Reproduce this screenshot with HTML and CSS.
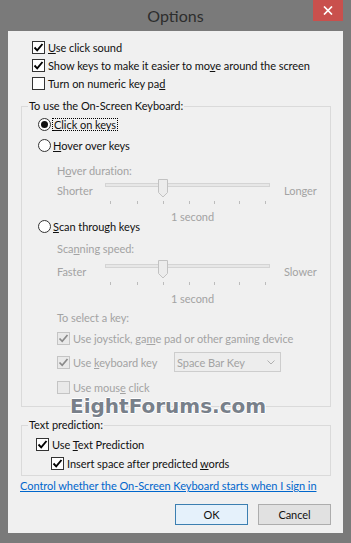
FILE: index.html
```html
<!DOCTYPE html>
<html>
<head>
<meta charset="utf-8">
<link rel="stylesheet" href="styles.css">
</head>
<body>
<div class="window">
  <div class="titlebar">
    <span class="title">Options</span>
    <span class="close"><svg width="10" height="9" viewBox="0 0 10 9"><path d="M1 0.5 L9 8.5 M9 0.5 L1 8.5" stroke="#fff" stroke-width="1.7" fill="none"/></svg></span>
  </div>
  <div class="client">
    <div class="top">
      <div class="row"><span class="box on"><svg width="11" height="11" viewBox="0 0 11 11"><path d="M1.5 5.5 L4.2 8.3 L9.5 2" stroke="#000" stroke-width="1.9" fill="none"/></svg></span><span><u>U</u>se click sound</span></div>
      <div class="row"><span class="box on"><svg width="11" height="11" viewBox="0 0 11 11"><path d="M1.5 5.5 L4.2 8.3 L9.5 2" stroke="#000" stroke-width="1.9" fill="none"/></svg></span><span>Show keys to make it easier to mo<u>v</u>e around the screen</span></div>
      <div class="row"><span class="box"></span><span>Turn on numeric key pa<u>d</u></span></div>
    </div>

    <fieldset class="group g1">
      <legend>To use the On-Screen Keyboard:</legend>
      <div class="gbody">
        <div class="rrow r1"><span class="radio on"></span><span class="focus"><u>C</u>lick on keys</span></div>
        <div class="rrow r2"><span class="radio"></span><span><u>H</u>over over keys</span></div>
        <div class="sub">
          <div class="lbl l-hover dis">H<u>o</u>ver duration:</div>
          <div class="slider s1">
            <span class="sl-l dis">Shorter</span>
            <svg width="165" height="26" viewBox="0 0 165 26">
              <rect x="0.5" y="4.5" width="164" height="3" fill="#e7e7e7" stroke="#d4d4d4"/>
              <path d="M53.5 0.5 H62.5 V13.5 L58 18 L53.5 13.5 Z" fill="#ececec" stroke="#c2c2c2"/>
              <path d="M5.5 22 V25 M32.5 22 V25 M58.5 22 V25 M84.5 22 V25 M109.5 22 V25 M134.5 22 V25 M160.5 22 V25" stroke="#bcbcbc"/>
            </svg>
            <span class="sl-r dis">Longer</span>
          </div>
          <div class="sec dis">1 second</div>
        </div>
        <div class="rrow r3"><span class="radio"></span><span><u>S</u>can through keys</span></div>
        <div class="sub">
          <div class="lbl l-scan dis">Sca<u>n</u>ning speed:</div>
          <div class="slider s2">
            <span class="sl-l dis">Faster</span>
            <svg width="165" height="26" viewBox="0 0 165 26">
              <rect x="0.5" y="4.5" width="164" height="3" fill="#e7e7e7" stroke="#d4d4d4"/>
              <path d="M53.5 0.5 H62.5 V13.5 L58 18 L53.5 13.5 Z" fill="#ececec" stroke="#c2c2c2"/>
              <path d="M5.5 22 V25 M32.5 22 V25 M58.5 22 V25 M84.5 22 V25 M109.5 22 V25 M134.5 22 V25 M160.5 22 V25" stroke="#bcbcbc"/>
            </svg>
            <span class="sl-r dis">Slower</span>
          </div>
          <div class="sec sec2 dis">1 second</div>
          <div class="lbl l-select dis">To select a key:</div>
          <div class="row c-joy dis"><span class="box dbox"><svg width="11" height="11" viewBox="0 0 11 11"><path d="M1.5 5.5 L4.2 8.3 L9.5 2" stroke="#8a8a8a" stroke-width="1.7" fill="none"/></svg></span><span>Use joystick, ga<u>m</u>e pad or other gaming device</span></div>
          <div class="row c-key dis"><span class="box dbox"><svg width="11" height="11" viewBox="0 0 11 11"><path d="M1.5 5.5 L4.2 8.3 L9.5 2" stroke="#8a8a8a" stroke-width="1.7" fill="none"/></svg></span><span class="keytext">Use <u>k</u>eyboard key</span>
            <span class="combo"><span>Space Bar Key</span><svg width="8" height="5" viewBox="0 0 8 5"><path d="M0.5 0.5 L4 4 L7.5 0.5" stroke="#b0b0b0" fill="none"/></svg></span>
          </div>
          <div class="row c-mouse dis"><span class="box dbox"></span><span>Use mous<u>e</u> click</span></div>
        </div>
      </div>
    </fieldset>

    <fieldset class="group g2">
      <legend>Text prediction:</legend>
      <div class="gbody2">
        <div class="row c-tp"><span class="box on"><svg width="11" height="11" viewBox="0 0 11 11"><path d="M1.5 5.5 L4.2 8.3 L9.5 2" stroke="#000" stroke-width="1.9" fill="none"/></svg></span><span>Use <u>T</u>ext Prediction</span></div>
        <div class="row c-sp"><span class="box on"><svg width="11" height="11" viewBox="0 0 11 11"><path d="M1.5 5.5 L4.2 8.3 L9.5 2" stroke="#000" stroke-width="1.9" fill="none"/></svg></span><span>Insert space after predicted <u>w</u>ords</span></div>
      </div>
    </fieldset>

    <a class="link" href="#">Control whether the On-Screen Keyboard starts when I sign in</a>

    <div class="buttons">
      <span class="btn ok">OK</span>
      <span class="btn">Cancel</span>
    </div>

    <div class="watermark">EightForums.com</div>
  </div>
</div>
</body>
</html>
```

FILE: styles.css
```css
* { box-sizing: border-box; }
html, body { margin: 0; padding: 0; }
body {
  width: 351px;
  height: 543px;
  overflow: hidden;
  background: #7a7a7a;
  font-family: Lato, "Liberation Sans", sans-serif;
  font-size: 11px;
  letter-spacing: -0.05px;
  color: #111;
}
.window {
  width: 351px;
  height: 543px;
  display: flex;
  flex-direction: column;
  background: #7a7a7a;
}
.titlebar {
  height: 31px;
  position: relative;
  display: flex;
  align-items: center;
  justify-content: center;
  flex: none;
}
.title {
  font-size: 16px;
  letter-spacing: 0;
  color: #2d2d2d;
}
.close {
  position: absolute;
  top: 0;
  right: 8px;
  width: 30px;
  height: 21px;
  background: #c9504d;
  display: flex;
  align-items: center;
  justify-content: center;
}
.client {
  margin: 0 8px;
  height: 502px;
  background: #f0f0f0;
  position: relative;
  display: flex;
  flex-direction: column;
  flex: none;
}
u { text-decoration: underline; text-underline-offset: 1px; }
.dis { color: #a3a3a3; }

.top { padding: 7px 0 0 24px; }
.row {
  height: 18px;
  display: flex;
  align-items: center;
  white-space: nowrap;
}
.box {
  width: 13px;
  height: 13px;
  border: 1px solid #333;
  background: #fff;
  margin-right: 3px;
  flex: none;
  display: flex;
  align-items: center;
  justify-content: center;
}
.dbox {
  border-color: #c4c4c4;
  background: #e9e9e9;
}

.group {
  margin: 7px 12px 0 13px;
  padding: 0;
  border: 1px solid #dadada;
  min-width: 0;
}
.group legend {
  margin-left: 6px;
  padding: 0 1px;
  height: 14px;
  line-height: 14px;
  white-space: nowrap;
}
.gbody { padding: 1px 0 10px 16px; }

.rrow {
  height: 21px;
  display: flex;
  align-items: center;
  white-space: nowrap;
}
.radio {
  width: 13px;
  height: 13px;
  border-radius: 50%;
  border: 1px solid #333;
  background: #fff;
  margin-right: 1px;
  flex: none;
  display: flex;
  align-items: center;
  justify-content: center;
}
.radio.on::after {
  content: "";
  width: 7px;
  height: 7px;
  border-radius: 50%;
  background: #111;
}
.rrow span:last-child { padding-left: 1px; }
.focus {
  border: 1px dotted #000;
  line-height: 11px;
  padding: 0 1px 0 0;
}
.r1 .focus { padding-left: 1px; }
.r3 { height: 20px; margin-top: -9px; }

.sub { padding-left: 19px; }
.lbl { height: 16px; line-height: 16px; }
.l-hover { margin-top: 7px; }
.l-scan { margin-top: 5px; }
.l-select { margin-top: 3px; }
.slider {
  display: grid;
  grid-template-columns: 48px 165px auto;
  height: 26px;
}
.slider svg { display: block; }
.s2 { margin-top: 3px; }
.sl-l, .sl-r { line-height: 16px; margin-top: 4px; }
.sl-r { margin-left: 14px; }
.sec {
  height: 16px;
  line-height: 16px;
  padding-left: 114px;
  margin-top: 4px;
}
.sec2 { margin-top: 5px; }
.c-joy { height: 19px; margin-top: 3px; }
.c-key { height: 20px; margin-top: 4px; }
.c-mouse { margin-top: 6px; }
.keytext { width: 101px; flex: none; }
.combo {
  width: 107px;
  height: 20px;
  border: 1px solid #cdcdcd;
  background: #ededed;
  display: flex;
  align-items: center;
  justify-content: space-between;
  padding: 0 5px 0 2px;
  color: #a3a3a3;
}

.g2 { margin-top: 12px; }
.g2 legend { height: 12px; line-height: 12px; }
.gbody2 { padding: 4px 0 3px 14px; }
.c-sp { margin-top: 1px; margin-left: 15px; }

.link {
  margin: 3px 0 0 12px;
  height: 14px;
  line-height: 14px;
  color: #0066cc;
  text-decoration: underline;
  white-space: nowrap;
  align-self: flex-start;
}
.buttons {
  margin-top: 11px;
  display: flex;
  justify-content: flex-end;
  gap: 10px;
  padding-right: 12px;
}
.btn {
  width: 73px;
  height: 21px;
  border: 1px solid #adadad;
  background: #e1e1e1;
  display: flex;
  align-items: center;
  justify-content: center;
  color: #111;
}
.btn.ok {
  border-color: #3c7fb1;
  background: #e5f1fb;
}
.watermark {
  position: absolute;
  left: 62px;
  top: 367px;
  font-family: "DejaVu Sans", sans-serif;
  font-weight: bold;
  font-size: 20px;
  line-height: 16px;
  letter-spacing: 0;
  color: #78808a;
  text-shadow: 1px 0 0 #fff, -1px 0 0 #fff, 0 1px 0 #fff, 0 -1px 0 #fff;
  white-space: nowrap;
}
```
